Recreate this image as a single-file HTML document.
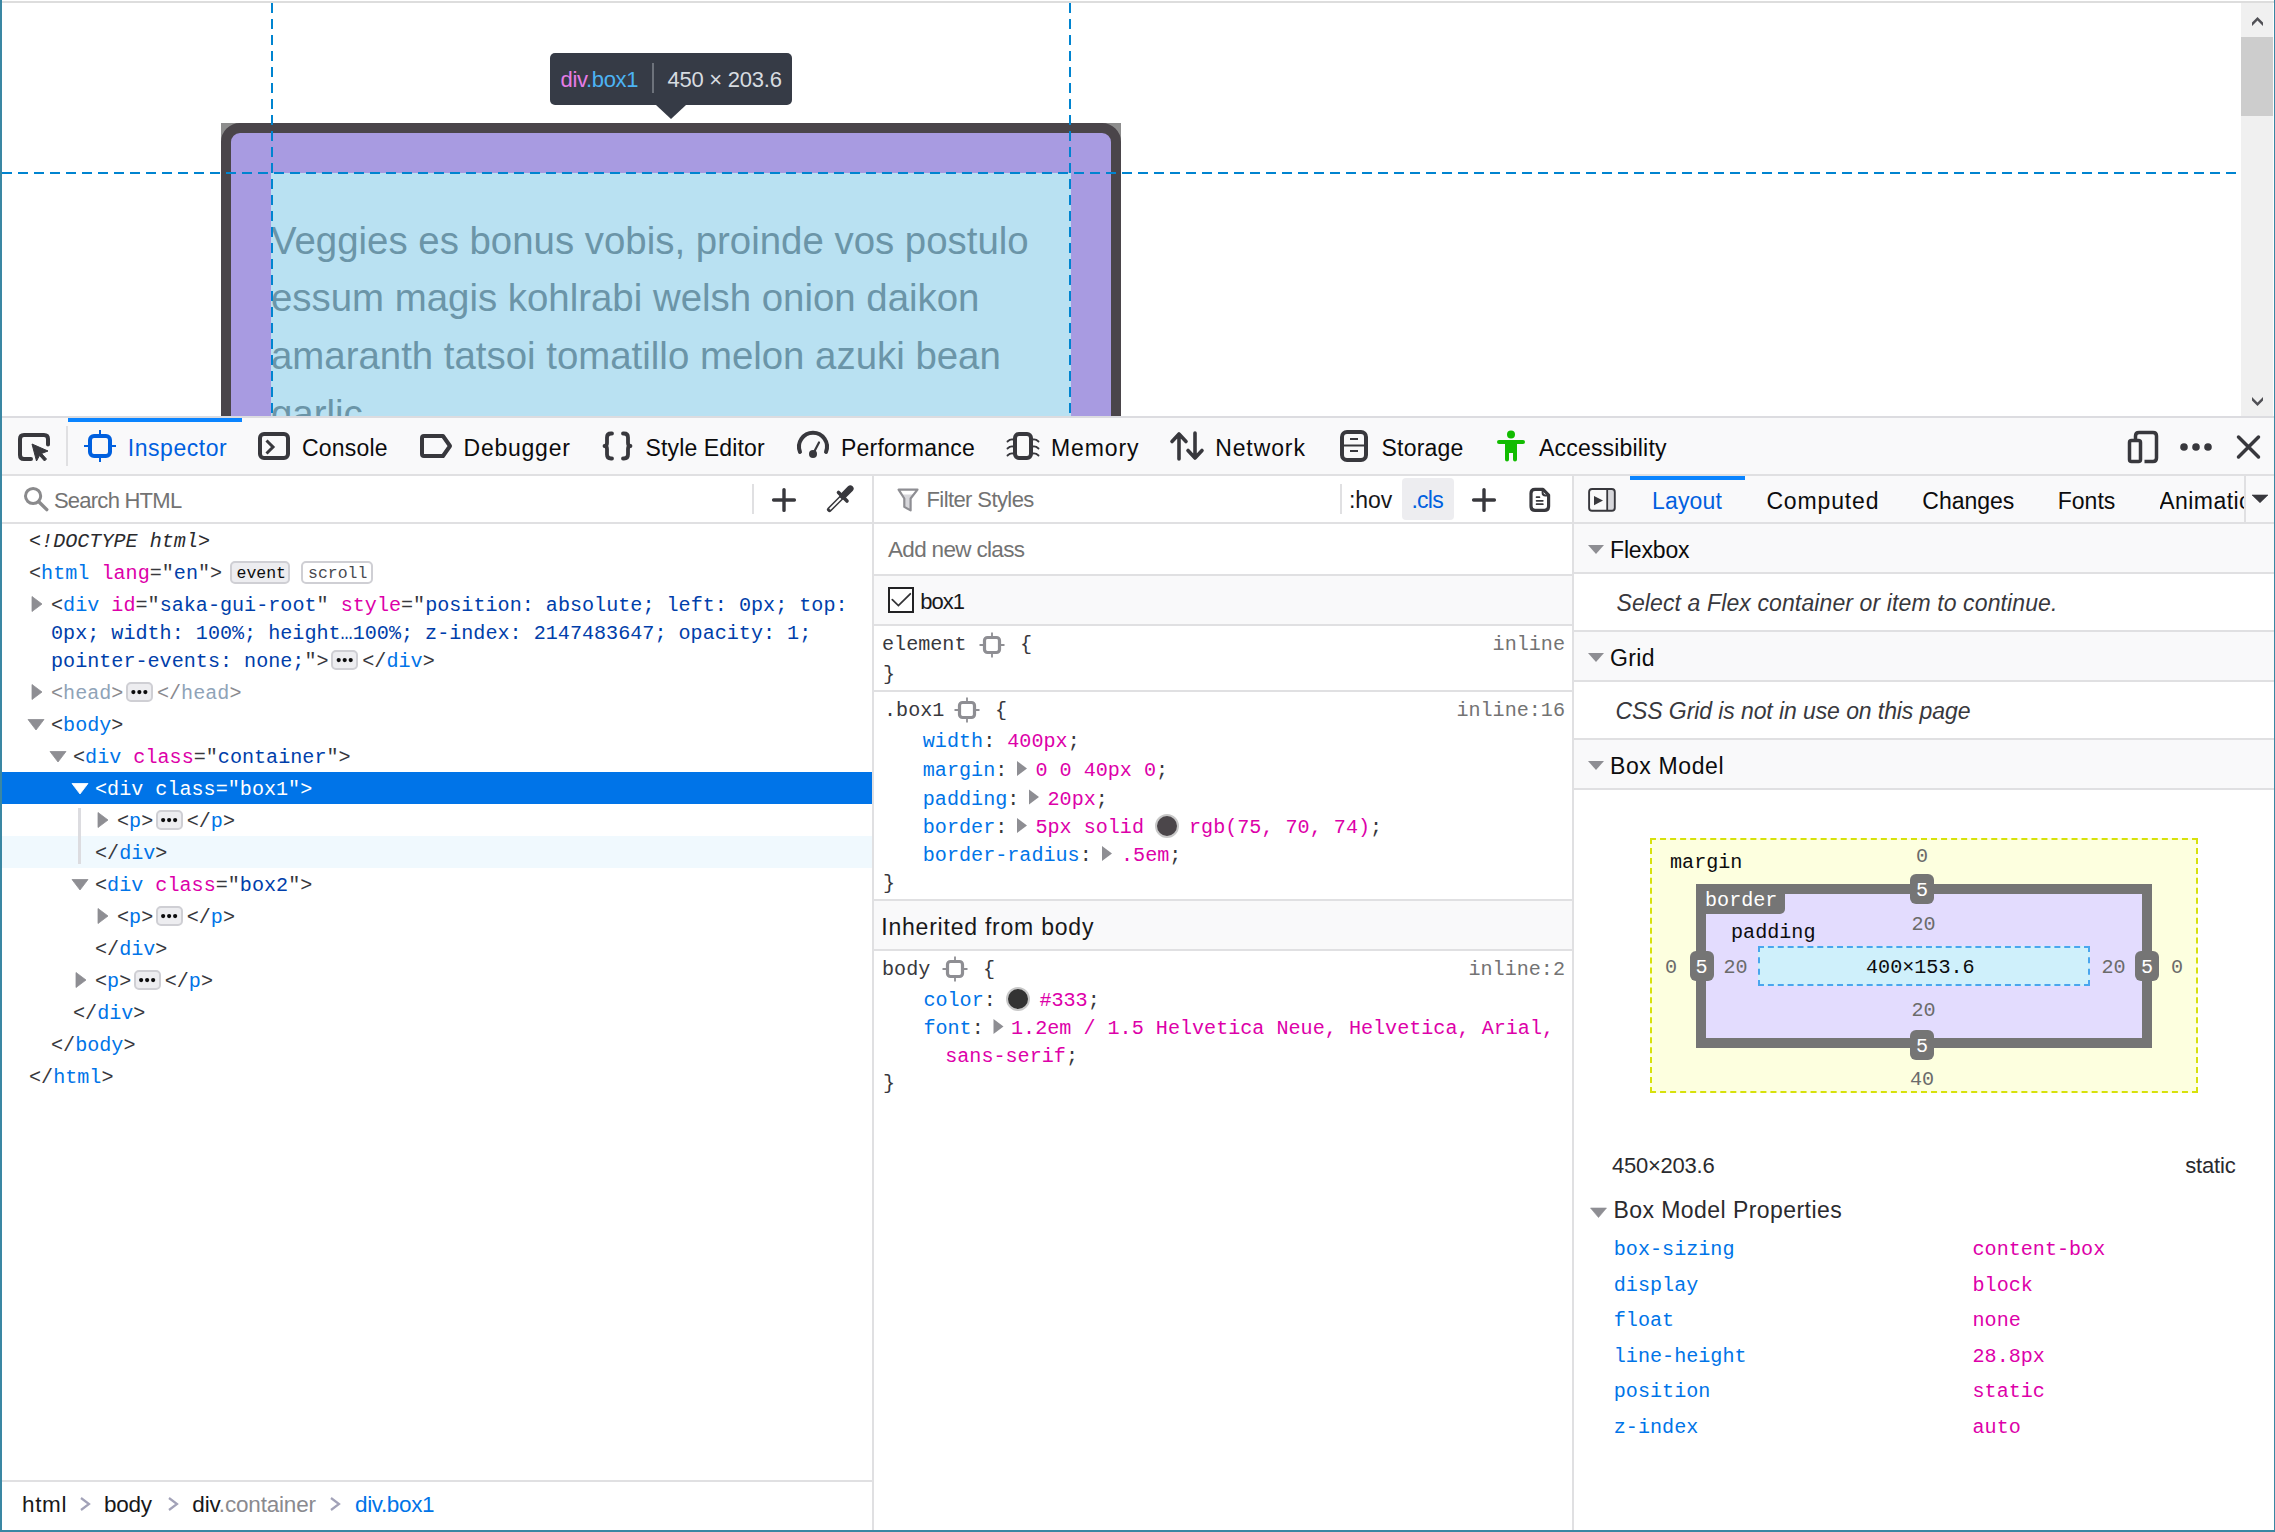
<!DOCTYPE html>
<html><head><meta charset="utf-8"><style>
html,body{margin:0;padding:0;}
body{width:2275px;height:1532px;overflow:hidden;position:relative;background:#fff;font-family:'Liberation Sans',sans-serif;}
body>div{position:absolute;}
</style></head><body>
<div style="left:0px;top:0px;width:2275px;height:416px;background:#ffffff;"></div>
<div style="left:2px;top:1px;width:2272px;height:2px;background:#dddddd;"></div>
<div style="left:221px;top:123px;width:20px;height:20px;background:#8d8d8d;"></div>
<div style="left:1101px;top:123px;width:20px;height:20px;background:#8d8d8d;"></div>
<div style="left:221px;top:123px;width:900px;height:400px;box-sizing:border-box;border:10px solid #4a454a;border-radius:19px;background:#a89be1;overflow:hidden"><div style="position:absolute;left:40px;top:40px;width:800px;height:400px;background:#b9e1f2"></div></div>
<div style="left:271px;top:221.93px;font-family:'Liberation Sans', sans-serif;font-size:38.4px;line-height:38.4px;color:#6b95a8;white-space:pre;">Veggies es bonus vobis, proinde vos postulo</div>
<div style="left:271px;top:279.13px;font-family:'Liberation Sans', sans-serif;font-size:38.4px;line-height:38.4px;color:#6b95a8;white-space:pre;">essum magis kohlrabi welsh onion daikon</div>
<div style="left:271px;top:336.93px;font-family:'Liberation Sans', sans-serif;font-size:38.4px;line-height:38.4px;color:#6b95a8;white-space:pre;">amaranth tatsoi tomatillo melon azuki bean</div>
<div style="left:271px;top:394.53px;font-family:'Liberation Sans', sans-serif;font-size:38.4px;line-height:38.4px;color:#6b95a8;white-space:pre;">garlic</div>
<div style="left:2241px;top:3px;width:32px;height:413px;background:#f0f0f0;"></div>
<div style="left:2241px;top:37px;width:32px;height:79px;background:#cdcdcd;"></div>
<div style="left:550px;top:53px;width:242px;height:52px;background:#363b46;border-radius:5px"></div>
<div style="left:560.50px;top:68.74px;font-family:'Liberation Sans', sans-serif;font-size:22px;line-height:22px;color:#18181a;white-space:pre;letter-spacing:-0.339px;"><span style="color:#e67ce6">div</span><span style="color:#4cb3f3">.box1</span></div>
<div style="left:652px;top:63px;width:1.5px;height:30px;background:#6d727b;"></div>
<div style="left:667.40px;top:68.74px;font-family:'Liberation Sans', sans-serif;font-size:22px;line-height:22px;color:#d7dbe0;white-space:pre;letter-spacing:-0.230px;">450 × 203.6</div>
<div style="left:0px;top:416px;width:2275px;height:60px;background:#f9f9fa;"></div>
<div style="left:2px;top:416px;width:2272px;height:2px;background:#dcdce0;"></div>
<div style="left:2px;top:474px;width:2272px;height:2px;background:#e0e0e2;"></div>
<div style="left:68px;top:418px;width:174px;height:4px;background:#0a84ff;"></div>
<div style="left:66px;top:426px;width:2px;height:40px;background:#e0e0e2;"></div>
<div style="left:127.80px;top:436.91px;font-family:'Liberation Sans', sans-serif;font-size:23px;line-height:23px;color:#0060df;white-space:pre;letter-spacing:0.544px;">Inspector</div>
<div style="left:302.10px;top:436.91px;font-family:'Liberation Sans', sans-serif;font-size:23px;line-height:23px;color:#0c0c0d;white-space:pre;letter-spacing:0.168px;">Console</div>
<div style="left:463.60px;top:436.91px;font-family:'Liberation Sans', sans-serif;font-size:23px;line-height:23px;color:#0c0c0d;white-space:pre;letter-spacing:0.749px;">Debugger</div>
<div style="left:645.60px;top:436.91px;font-family:'Liberation Sans', sans-serif;font-size:23px;line-height:23px;color:#0c0c0d;white-space:pre;letter-spacing:0.123px;">Style Editor</div>
<div style="left:841.00px;top:436.91px;font-family:'Liberation Sans', sans-serif;font-size:23px;line-height:23px;color:#0c0c0d;white-space:pre;letter-spacing:0.203px;">Performance</div>
<div style="left:1051.00px;top:436.91px;font-family:'Liberation Sans', sans-serif;font-size:23px;line-height:23px;color:#0c0c0d;white-space:pre;letter-spacing:0.888px;">Memory</div>
<div style="left:1215.20px;top:436.91px;font-family:'Liberation Sans', sans-serif;font-size:23px;line-height:23px;color:#0c0c0d;white-space:pre;letter-spacing:0.891px;">Network</div>
<div style="left:1381.60px;top:436.91px;font-family:'Liberation Sans', sans-serif;font-size:23px;line-height:23px;color:#0c0c0d;white-space:pre;letter-spacing:0.189px;">Storage</div>
<div style="left:1539.00px;top:436.91px;font-family:'Liberation Sans', sans-serif;font-size:23px;line-height:23px;color:#0c0c0d;white-space:pre;letter-spacing:0.187px;">Accessibility</div>
<div style="left:0px;top:476px;width:2275px;height:1056px;background:#ffffff;"></div>
<div style="left:872px;top:476px;width:2px;height:1056px;background:#e0e0e2;"></div>
<div style="left:1572px;top:476px;width:2px;height:1056px;background:#e0e0e2;"></div>
<div style="left:2px;top:522px;width:870px;height:2px;background:#e0e0e2;"></div>
<div style="left:874px;top:522px;width:698px;height:2px;background:#e0e0e2;"></div>
<div style="left:1574px;top:522px;width:700px;height:2px;background:#e0e0e2;"></div>
<div style="left:1574px;top:476px;width:700px;height:46px;background:#f9f9fa;"></div>
<div style="left:53.90px;top:489.74px;font-family:'Liberation Sans', sans-serif;font-size:22px;line-height:22px;color:#737373;white-space:pre;letter-spacing:-0.747px;">Search HTML</div>
<div style="left:752px;top:484px;width:2px;height:30px;background:#e0e0e2;"></div>
<div style="left:29px;top:531.50px;font-family:'Liberation Mono', monospace;font-size:20.13px;line-height:20.13px;color:#2a2a2e;white-space:pre;font-style:italic">&lt;!DOCTYPE html&gt;</div>
<div style="left:29px;top:563.50px;font-family:'Liberation Mono', monospace;font-size:20.13px;line-height:20.13px;color:#38383d;white-space:pre;"><span style="color:#38383d">&lt;</span><span style="color:#0074e8">html</span><span style="color:#38383d"> </span><span style="color:#dd00a9">lang</span><span style="color:#38383d">=&quot;</span><span style="color:#003eaa">en</span><span style="color:#38383d">&quot;</span><span style="color:#38383d">&gt;</span></div>
<div style="left:230.3px;top:560.5px;width:56.2px;height:19px;border:2px solid #cfcfd4;border-radius:5px;background:#ededf0"></div>
<div style="left:236.5px;top:565.71px;font-family:'Liberation Mono', monospace;font-size:16.5px;line-height:16.5px;color:#0c0c0d;white-space:pre;">event</div>
<div style="left:301.1px;top:560.5px;width:67.6px;height:19px;border:2px solid #cfcfd4;border-radius:5px;background:#ffffff"></div>
<div style="left:308px;top:565.71px;font-family:'Liberation Mono', monospace;font-size:16.5px;line-height:16.5px;color:#4a4a4f;white-space:pre;">scroll</div>
<div style="left:51px;top:595.50px;font-family:'Liberation Mono', monospace;font-size:20.13px;line-height:20.13px;color:#38383d;white-space:pre;"><span style="color:#38383d">&lt;</span><span style="color:#0074e8">div</span><span style="color:#38383d"> </span><span style="color:#dd00a9">id</span><span style="color:#38383d">=&quot;</span><span style="color:#003eaa">saka-gui-root</span><span style="color:#38383d">&quot;</span><span style="color:#38383d"> </span><span style="color:#dd00a9">style</span><span style="color:#38383d">=&quot;</span><span style="color:#003eaa">position: absolute; left: 0px; top:</span></div>
<div style="left:51px;top:623.50px;font-family:'Liberation Mono', monospace;font-size:20.13px;line-height:20.13px;color:#38383d;white-space:pre;"><span style="color:#003eaa">0px; width: 100%; height…100%; z-index: 2147483647; opacity: 1;</span></div>
<div style="left:51px;top:651.50px;font-family:'Liberation Mono', monospace;font-size:20.13px;line-height:20.13px;color:#38383d;white-space:pre;"><span style="color:#003eaa">pointer-events: none;</span><span style="color:#38383d">&quot;&gt;</span></div>
<div style="left:331.094px;top:650.3px;width:23px;height:15.4px;border:2px solid #cfcfd4;border-radius:5px;background:#ededf0"></div>
<div style="left:362.294px;top:651.50px;font-family:'Liberation Mono', monospace;font-size:20.13px;line-height:20.13px;color:#18181a;white-space:pre;"><span style="color:#38383d">&lt;/</span><span style="color:#0074e8">div</span><span style="color:#38383d">&gt;</span></div>
<div style="left:51px;top:683.50px;font-family:'Liberation Mono', monospace;font-size:20.13px;line-height:20.13px;color:#38383d;white-space:pre;"><span style="color:#8a8a8f">&lt;</span><span style="color:#8fa3b8">head</span><span style="color:#8a8a8f">&gt;</span></div>
<div style="left:125.76799999999999px;top:682.3px;width:23px;height:15.4px;border:2px solid #cfcfd4;border-radius:5px;background:#ededf0"></div>
<div style="left:156.968px;top:683.50px;font-family:'Liberation Mono', monospace;font-size:20.13px;line-height:20.13px;color:#18181a;white-space:pre;"><span style="color:#8a8a8f">&lt;/</span><span style="color:#8fa3b8">head</span><span style="color:#8a8a8f">&gt;</span></div>
<div style="left:51px;top:715.50px;font-family:'Liberation Mono', monospace;font-size:20.13px;line-height:20.13px;color:#38383d;white-space:pre;"><span style="color:#38383d">&lt;</span><span style="color:#0074e8">body</span><span style="color:#38383d">&gt;</span></div>
<div style="left:73px;top:747.50px;font-family:'Liberation Mono', monospace;font-size:20.13px;line-height:20.13px;color:#38383d;white-space:pre;"><span style="color:#38383d">&lt;</span><span style="color:#0074e8">div</span><span style="color:#38383d"> </span><span style="color:#dd00a9">class</span><span style="color:#38383d">=&quot;</span><span style="color:#003eaa">container</span><span style="color:#38383d">&quot;</span><span style="color:#38383d">&gt;</span></div>
<div style="left:2px;top:772px;width:870px;height:32px;background:#0074e8;"></div>
<div style="left:95px;top:779.50px;font-family:'Liberation Mono', monospace;font-size:20.13px;line-height:20.13px;color:#ffffff;white-space:pre;">&lt;div class=&quot;box1&quot;&gt;</div>
<div style="left:78px;top:808px;width:2.5px;height:56px;background:#dcdce0;"></div>
<div style="left:117px;top:811.50px;font-family:'Liberation Mono', monospace;font-size:20.13px;line-height:20.13px;color:#38383d;white-space:pre;"><span style="color:#38383d">&lt;</span><span style="color:#0074e8">p</span><span style="color:#38383d">&gt;</span></div>
<div style="left:155.534px;top:810.3px;width:23px;height:15.4px;border:2px solid #cfcfd4;border-radius:5px;background:#ededf0"></div>
<div style="left:186.73399999999998px;top:811.50px;font-family:'Liberation Mono', monospace;font-size:20.13px;line-height:20.13px;color:#18181a;white-space:pre;"><span style="color:#38383d">&lt;/</span><span style="color:#0074e8">p</span><span style="color:#38383d">&gt;</span></div>
<div style="left:2px;top:836px;width:870px;height:32px;background:#f0f9fe;"></div>
<div style="left:78px;top:836px;width:2.5px;height:28px;background:#dcdce0;"></div>
<div style="left:95px;top:843.50px;font-family:'Liberation Mono', monospace;font-size:20.13px;line-height:20.13px;color:#38383d;white-space:pre;"><span style="color:#38383d">&lt;/</span><span style="color:#0074e8">div</span><span style="color:#38383d">&gt;</span></div>
<div style="left:95px;top:875.50px;font-family:'Liberation Mono', monospace;font-size:20.13px;line-height:20.13px;color:#38383d;white-space:pre;"><span style="color:#38383d">&lt;</span><span style="color:#0074e8">div</span><span style="color:#38383d"> </span><span style="color:#dd00a9">class</span><span style="color:#38383d">=&quot;</span><span style="color:#003eaa">box2</span><span style="color:#38383d">&quot;</span><span style="color:#38383d">&gt;</span></div>
<div style="left:117px;top:907.50px;font-family:'Liberation Mono', monospace;font-size:20.13px;line-height:20.13px;color:#38383d;white-space:pre;"><span style="color:#38383d">&lt;</span><span style="color:#0074e8">p</span><span style="color:#38383d">&gt;</span></div>
<div style="left:155.534px;top:906.3px;width:23px;height:15.4px;border:2px solid #cfcfd4;border-radius:5px;background:#ededf0"></div>
<div style="left:186.73399999999998px;top:907.50px;font-family:'Liberation Mono', monospace;font-size:20.13px;line-height:20.13px;color:#18181a;white-space:pre;"><span style="color:#38383d">&lt;/</span><span style="color:#0074e8">p</span><span style="color:#38383d">&gt;</span></div>
<div style="left:95px;top:939.50px;font-family:'Liberation Mono', monospace;font-size:20.13px;line-height:20.13px;color:#38383d;white-space:pre;"><span style="color:#38383d">&lt;/</span><span style="color:#0074e8">div</span><span style="color:#38383d">&gt;</span></div>
<div style="left:95px;top:971.50px;font-family:'Liberation Mono', monospace;font-size:20.13px;line-height:20.13px;color:#38383d;white-space:pre;"><span style="color:#38383d">&lt;</span><span style="color:#0074e8">p</span><span style="color:#38383d">&gt;</span></div>
<div style="left:133.534px;top:970.3px;width:23px;height:15.4px;border:2px solid #cfcfd4;border-radius:5px;background:#ededf0"></div>
<div style="left:164.73399999999998px;top:971.50px;font-family:'Liberation Mono', monospace;font-size:20.13px;line-height:20.13px;color:#18181a;white-space:pre;"><span style="color:#38383d">&lt;/</span><span style="color:#0074e8">p</span><span style="color:#38383d">&gt;</span></div>
<div style="left:73px;top:1003.50px;font-family:'Liberation Mono', monospace;font-size:20.13px;line-height:20.13px;color:#38383d;white-space:pre;"><span style="color:#38383d">&lt;/</span><span style="color:#0074e8">div</span><span style="color:#38383d">&gt;</span></div>
<div style="left:51px;top:1035.50px;font-family:'Liberation Mono', monospace;font-size:20.13px;line-height:20.13px;color:#38383d;white-space:pre;"><span style="color:#38383d">&lt;/</span><span style="color:#0074e8">body</span><span style="color:#38383d">&gt;</span></div>
<div style="left:29px;top:1067.50px;font-family:'Liberation Mono', monospace;font-size:20.13px;line-height:20.13px;color:#38383d;white-space:pre;"><span style="color:#38383d">&lt;/</span><span style="color:#0074e8">html</span><span style="color:#38383d">&gt;</span></div>
<div style="left:2px;top:1480px;width:870px;height:2px;background:#e0e0e2;"></div>
<div style="left:22.00px;top:1493.62px;font-family:'Liberation Sans', sans-serif;font-size:22.5px;line-height:22.5px;color:#18181a;white-space:pre;letter-spacing:0.664px;">html</div>
<div style="left:104.00px;top:1493.62px;font-family:'Liberation Sans', sans-serif;font-size:22.5px;line-height:22.5px;color:#18181a;white-space:pre;letter-spacing:-0.280px;">body</div>
<div style="left:192.30px;top:1493.62px;font-family:'Liberation Sans', sans-serif;font-size:22.5px;line-height:22.5px;color:#18181a;white-space:pre;letter-spacing:-0.184px;"><span style="color:#18181a">div</span><span style="color:#8a8a8f">.container</span></div>
<div style="left:355.00px;top:1493.62px;font-family:'Liberation Sans', sans-serif;font-size:22.5px;line-height:22.5px;color:#0074e8;white-space:pre;letter-spacing:-0.374px;">div.box1</div>
<div style="left:926.50px;top:489.44px;font-family:'Liberation Sans', sans-serif;font-size:22px;line-height:22px;color:#737373;white-space:pre;letter-spacing:-0.592px;">Filter Styles</div>
<div style="left:1340px;top:484px;width:2px;height:30px;background:#e0e0e2;"></div>
<div style="left:1349.00px;top:488.91px;font-family:'Liberation Sans', sans-serif;font-size:23px;line-height:23px;color:#18181a;white-space:pre;letter-spacing:-0.058px;">:hov</div>
<div style="left:1402px;top:478px;width:52px;height:42px;background:#ededf0;border-radius:4px"></div>
<div style="left:1411.40px;top:488.91px;font-family:'Liberation Sans', sans-serif;font-size:23px;line-height:23px;color:#0060df;white-space:pre;letter-spacing:-0.733px;">.cls</div>
<div style="left:888.00px;top:539.12px;font-family:'Liberation Sans', sans-serif;font-size:22.5px;line-height:22.5px;color:#737373;white-space:pre;letter-spacing:-0.669px;">Add new class</div>
<div style="left:874px;top:574px;width:698px;height:2px;background:#e0e0e2;"></div>
<div style="left:874px;top:576px;width:698px;height:48px;background:#f9f9fa;"></div>
<div style="left:874px;top:624px;width:698px;height:2px;background:#e0e0e2;"></div>
<div style="left:888px;top:587px;width:22px;height:22px;border:2px solid #222224;background:#fff"></div>
<div style="left:920.30px;top:590.74px;font-family:'Liberation Sans', sans-serif;font-size:22px;line-height:22px;color:#18181a;white-space:pre;letter-spacing:-0.990px;">box1</div>
<div style="left:882px;top:635.00px;font-family:'Liberation Mono', monospace;font-size:20.13px;line-height:20.13px;color:#38383d;white-space:pre;"><span style="color:#38383d">element</span></div>
<div style="left:1020px;top:635.00px;font-family:'Liberation Mono', monospace;font-size:20.13px;line-height:20.13px;color:#38383d;white-space:pre;"><span style="color:#38383d">{</span></div>
<div style="right:710px;top:635.00px;font-family:'Liberation Mono', monospace;font-size:20.13px;line-height:20.13px;color:#737373;white-space:pre;">inline</div>
<div style="left:883px;top:665.00px;font-family:'Liberation Mono', monospace;font-size:20.13px;line-height:20.13px;color:#38383d;white-space:pre;"><span style="color:#38383d">}</span></div>
<div style="left:874px;top:690px;width:698px;height:2px;background:#e0e0e2;"></div>
<div style="left:884px;top:700.50px;font-family:'Liberation Mono', monospace;font-size:20.13px;line-height:20.13px;color:#38383d;white-space:pre;"><span style="color:#38383d">.box1</span></div>
<div style="left:995px;top:700.50px;font-family:'Liberation Mono', monospace;font-size:20.13px;line-height:20.13px;color:#38383d;white-space:pre;"><span style="color:#38383d">{</span></div>
<div style="right:710px;top:701.00px;font-family:'Liberation Mono', monospace;font-size:20.13px;line-height:20.13px;color:#737373;white-space:pre;">inline:16</div>
<div style="left:922.8px;top:732.30px;font-family:'Liberation Mono', monospace;font-size:20.13px;line-height:20.13px;color:#38383d;white-space:pre;"><span style="color:#0074e8">width</span><span style="color:#38383d">: </span><span style="color:#dd00a9">400px</span><span style="color:#38383d">;</span></div>
<div style="left:922.8px;top:761.00px;font-family:'Liberation Mono', monospace;font-size:20.13px;line-height:20.13px;color:#38383d;white-space:pre;"><span style="color:#0074e8">margin</span><span style="color:#38383d">:</span></div>
<div style="left:1035.4px;top:761.00px;font-family:'Liberation Mono', monospace;font-size:20.13px;line-height:20.13px;color:#38383d;white-space:pre;"><span style="color:#dd00a9">0 0 40px 0</span><span style="color:#38383d">;</span></div>
<div style="left:922.8px;top:789.50px;font-family:'Liberation Mono', monospace;font-size:20.13px;line-height:20.13px;color:#38383d;white-space:pre;"><span style="color:#0074e8">padding</span><span style="color:#38383d">:</span></div>
<div style="left:1047.5px;top:789.50px;font-family:'Liberation Mono', monospace;font-size:20.13px;line-height:20.13px;color:#38383d;white-space:pre;"><span style="color:#dd00a9">20px</span><span style="color:#38383d">;</span></div>
<div style="left:922.8px;top:818.00px;font-family:'Liberation Mono', monospace;font-size:20.13px;line-height:20.13px;color:#38383d;white-space:pre;"><span style="color:#0074e8">border</span><span style="color:#38383d">:</span></div>
<div style="left:1035.4px;top:818.00px;font-family:'Liberation Mono', monospace;font-size:20.13px;line-height:20.13px;color:#38383d;white-space:pre;"><span style="color:#dd00a9">5px solid</span></div>
<div style="left:1189px;top:818.00px;font-family:'Liberation Mono', monospace;font-size:20.13px;line-height:20.13px;color:#38383d;white-space:pre;"><span style="color:#dd00a9">rgb(75, 70, 74)</span><span style="color:#38383d">;</span></div>
<div style="left:922.8px;top:846.00px;font-family:'Liberation Mono', monospace;font-size:20.13px;line-height:20.13px;color:#38383d;white-space:pre;"><span style="color:#0074e8">border-radius</span><span style="color:#38383d">:</span></div>
<div style="left:1121px;top:846.00px;font-family:'Liberation Mono', monospace;font-size:20.13px;line-height:20.13px;color:#38383d;white-space:pre;"><span style="color:#dd00a9">.5em</span><span style="color:#38383d">;</span></div>
<div style="left:883px;top:874.00px;font-family:'Liberation Mono', monospace;font-size:20.13px;line-height:20.13px;color:#38383d;white-space:pre;"><span style="color:#38383d">}</span></div>
<div style="left:874px;top:899px;width:698px;height:2px;background:#e0e0e2;"></div>
<div style="left:874px;top:901px;width:698px;height:48px;background:#f9f9fa;"></div>
<div style="left:874px;top:949px;width:698px;height:2px;background:#e0e0e2;"></div>
<div style="left:881.30px;top:916.01px;font-family:'Liberation Sans', sans-serif;font-size:23px;line-height:23px;color:#18181a;white-space:pre;letter-spacing:0.774px;">Inherited from body</div>
<div style="left:882px;top:960.00px;font-family:'Liberation Mono', monospace;font-size:20.13px;line-height:20.13px;color:#38383d;white-space:pre;"><span style="color:#38383d">body</span></div>
<div style="left:983px;top:960.00px;font-family:'Liberation Mono', monospace;font-size:20.13px;line-height:20.13px;color:#38383d;white-space:pre;"><span style="color:#38383d">{</span></div>
<div style="right:710px;top:960.00px;font-family:'Liberation Mono', monospace;font-size:20.13px;line-height:20.13px;color:#737373;white-space:pre;">inline:2</div>
<div style="left:923.4px;top:991.00px;font-family:'Liberation Mono', monospace;font-size:20.13px;line-height:20.13px;color:#38383d;white-space:pre;"><span style="color:#0074e8">color</span><span style="color:#38383d">:</span></div>
<div style="left:1039.4px;top:991.00px;font-family:'Liberation Mono', monospace;font-size:20.13px;line-height:20.13px;color:#38383d;white-space:pre;"><span style="color:#dd00a9">#333</span><span style="color:#38383d">;</span></div>
<div style="left:923.4px;top:1019.00px;font-family:'Liberation Mono', monospace;font-size:20.13px;line-height:20.13px;color:#38383d;white-space:pre;"><span style="color:#0074e8">font</span><span style="color:#38383d">:</span></div>
<div style="left:1011px;top:1019.00px;font-family:'Liberation Mono', monospace;font-size:20.13px;line-height:20.13px;color:#38383d;white-space:pre;"><span style="color:#dd00a9">1.2em / 1.5 Helvetica Neue, Helvetica, Arial,</span></div>
<div style="left:945.2px;top:1047.00px;font-family:'Liberation Mono', monospace;font-size:20.13px;line-height:20.13px;color:#38383d;white-space:pre;"><span style="color:#dd00a9">sans-serif</span><span style="color:#38383d">;</span></div>
<div style="left:883px;top:1074.00px;font-family:'Liberation Mono', monospace;font-size:20.13px;line-height:20.13px;color:#38383d;white-space:pre;"><span style="color:#38383d">}</span></div>
<div style="left:1630px;top:476px;width:115px;height:4px;background:#0a84ff;"></div>
<div style="left:1652.00px;top:489.61px;font-family:'Liberation Sans', sans-serif;font-size:23px;line-height:23px;color:#0060df;white-space:pre;letter-spacing:0.167px;">Layout</div>
<div style="left:1766.40px;top:489.61px;font-family:'Liberation Sans', sans-serif;font-size:23px;line-height:23px;color:#0c0c0d;white-space:pre;letter-spacing:0.854px;">Computed</div>
<div style="left:1922.30px;top:489.61px;font-family:'Liberation Sans', sans-serif;font-size:23px;line-height:23px;color:#0c0c0d;white-space:pre;letter-spacing:-0.011px;">Changes</div>
<div style="left:2057.70px;top:489.61px;font-family:'Liberation Sans', sans-serif;font-size:23px;line-height:23px;color:#0c0c0d;white-space:pre;letter-spacing:0.019px;">Fonts</div>
<div style="left:2159.7px;top:480px;width:84.3px;height:40px;overflow:hidden"><div style="position:absolute;left:-0.5px;top:9.61px;font-size:23px;line-height:23px;letter-spacing:0.45px;color:#0c0c0d;white-space:pre">Animations</div></div>
<div style="left:2244px;top:476px;width:2px;height:46px;background:#e0e0e2;"></div>
<div style="left:1574px;top:524px;width:700px;height:48px;background:#f9f9fa;"></div>
<div style="left:1574px;top:572px;width:700px;height:2px;background:#e0e0e2;"></div>
<div style="left:1610.00px;top:538.71px;font-family:'Liberation Sans', sans-serif;font-size:23px;line-height:23px;color:#0c0c0d;white-space:pre;letter-spacing:-0.172px;">Flexbox</div>
<div style="left:1616.50px;top:591.91px;font-family:'Liberation Sans', sans-serif;font-size:23px;line-height:23px;color:#38383d;white-space:pre;letter-spacing:0.115px;font-style:italic">Select a Flex container or item to continue.</div>
<div style="left:1574px;top:630px;width:700px;height:2px;background:#e0e0e2;"></div>
<div style="left:1574px;top:632px;width:700px;height:48px;background:#f9f9fa;"></div>
<div style="left:1574px;top:680px;width:700px;height:2px;background:#e0e0e2;"></div>
<div style="left:1610.00px;top:646.71px;font-family:'Liberation Sans', sans-serif;font-size:23px;line-height:23px;color:#0c0c0d;white-space:pre;letter-spacing:0.347px;">Grid</div>
<div style="left:1615.50px;top:699.91px;font-family:'Liberation Sans', sans-serif;font-size:23px;line-height:23px;color:#38383d;white-space:pre;letter-spacing:-0.088px;font-style:italic">CSS Grid is not in use on this page</div>
<div style="left:1574px;top:738px;width:700px;height:2px;background:#e0e0e2;"></div>
<div style="left:1574px;top:740px;width:700px;height:48px;background:#f9f9fa;"></div>
<div style="left:1574px;top:788px;width:700px;height:2px;background:#e0e0e2;"></div>
<div style="left:1610.00px;top:754.71px;font-family:'Liberation Sans', sans-serif;font-size:23px;line-height:23px;color:#0c0c0d;white-space:pre;letter-spacing:0.618px;">Box Model</div>
<div style="left:1650px;top:838px;width:548px;height:255px;box-sizing:border-box;border:2px dashed #d7e10b;background:#fdffdf"></div>
<div style="left:1696px;top:884px;width:456px;height:164px;box-sizing:border-box;border:10px solid #757575;background:#e3dcfe"></div>
<div style="left:1758px;top:946px;width:332px;height:40px;box-sizing:border-box;border:2px dashed #49a6ee;background:#cff0fb"></div>
<div style="left:1696px;top:884px;width:89px;height:30px;background:#757575;border-bottom-right-radius:5px"></div>
<div style="left:1705px;top:890.50px;font-family:'Liberation Mono', monospace;font-size:20.13px;line-height:20.13px;color:#ffffff;white-space:pre;">border</div>
<div style="left:1670px;top:853.00px;font-family:'Liberation Mono', monospace;font-size:20.13px;line-height:20.13px;color:#0c0c0d;white-space:pre;">margin</div>
<div style="left:1731px;top:923.00px;font-family:'Liberation Mono', monospace;font-size:20.13px;line-height:20.13px;color:#0c0c0d;white-space:pre;">padding</div>
<div style="left:1866px;top:957.50px;font-family:'Liberation Mono', monospace;font-size:20.13px;line-height:20.13px;color:#0c0c0d;white-space:pre;">400×153.6</div>
<div style="left:1916px;top:847.00px;font-family:'Liberation Mono', monospace;font-size:20.13px;line-height:20.13px;color:#6b6b6b;white-space:pre;">0</div>
<div style="left:1911.5px;top:915.00px;font-family:'Liberation Mono', monospace;font-size:20.13px;line-height:20.13px;color:#6b6b6b;white-space:pre;">20</div>
<div style="left:1911.5px;top:1001.00px;font-family:'Liberation Mono', monospace;font-size:20.13px;line-height:20.13px;color:#6b6b6b;white-space:pre;">20</div>
<div style="left:1910px;top:1069.50px;font-family:'Liberation Mono', monospace;font-size:20.13px;line-height:20.13px;color:#6b6b6b;white-space:pre;">40</div>
<div style="left:1665px;top:957.50px;font-family:'Liberation Mono', monospace;font-size:20.13px;line-height:20.13px;color:#6b6b6b;white-space:pre;">0</div>
<div style="left:1723.5px;top:957.50px;font-family:'Liberation Mono', monospace;font-size:20.13px;line-height:20.13px;color:#6b6b6b;white-space:pre;">20</div>
<div style="left:2101.5px;top:957.50px;font-family:'Liberation Mono', monospace;font-size:20.13px;line-height:20.13px;color:#6b6b6b;white-space:pre;">20</div>
<div style="left:2171px;top:957.50px;font-family:'Liberation Mono', monospace;font-size:20.13px;line-height:20.13px;color:#6b6b6b;white-space:pre;">0</div>
<div style="left:1910px;top:874px;width:24px;height:30px;background:#757575;border-radius:6px"></div>
<div style="left:1916px;top:881.00px;font-family:'Liberation Mono', monospace;font-size:20.13px;line-height:20.13px;color:#ffffff;white-space:pre;">5</div>
<div style="left:1910px;top:1030px;width:24px;height:30px;background:#757575;border-radius:6px"></div>
<div style="left:1916px;top:1037.00px;font-family:'Liberation Mono', monospace;font-size:20.13px;line-height:20.13px;color:#ffffff;white-space:pre;">5</div>
<div style="left:1689.5px;top:951px;width:24px;height:30px;background:#757575;border-radius:6px"></div>
<div style="left:1695.5px;top:958.00px;font-family:'Liberation Mono', monospace;font-size:20.13px;line-height:20.13px;color:#ffffff;white-space:pre;">5</div>
<div style="left:2135px;top:951px;width:24px;height:30px;background:#757575;border-radius:6px"></div>
<div style="left:2141px;top:958.00px;font-family:'Liberation Mono', monospace;font-size:20.13px;line-height:20.13px;color:#ffffff;white-space:pre;">5</div>
<div style="left:1612.00px;top:1155.24px;font-family:'Liberation Sans', sans-serif;font-size:22px;line-height:22px;color:#2a2a2e;white-space:pre;letter-spacing:-0.247px;">450×203.6</div>
<div style="right:39.5px;top:1155.24px;font-family:'Liberation Sans', sans-serif;font-size:22px;line-height:22px;color:#2a2a2e;white-space:pre;letter-spacing:-0.170px;">static</div>
<div style="left:1613.50px;top:1199.11px;font-family:'Liberation Sans', sans-serif;font-size:23px;line-height:23px;color:#2a2a2e;white-space:pre;letter-spacing:0.438px;">Box Model Properties</div>
<div style="left:1613.8px;top:1240.00px;font-family:'Liberation Mono', monospace;font-size:20.13px;line-height:20.13px;color:#0074e8;white-space:pre;">box-sizing</div>
<div style="left:1972.5px;top:1240.00px;font-family:'Liberation Mono', monospace;font-size:20.13px;line-height:20.13px;color:#dd00a9;white-space:pre;">content-box</div>
<div style="left:1613.8px;top:1275.60px;font-family:'Liberation Mono', monospace;font-size:20.13px;line-height:20.13px;color:#0074e8;white-space:pre;">display</div>
<div style="left:1972.5px;top:1275.60px;font-family:'Liberation Mono', monospace;font-size:20.13px;line-height:20.13px;color:#dd00a9;white-space:pre;">block</div>
<div style="left:1613.8px;top:1311.20px;font-family:'Liberation Mono', monospace;font-size:20.13px;line-height:20.13px;color:#0074e8;white-space:pre;">float</div>
<div style="left:1972.5px;top:1311.20px;font-family:'Liberation Mono', monospace;font-size:20.13px;line-height:20.13px;color:#dd00a9;white-space:pre;">none</div>
<div style="left:1613.8px;top:1346.80px;font-family:'Liberation Mono', monospace;font-size:20.13px;line-height:20.13px;color:#0074e8;white-space:pre;">line-height</div>
<div style="left:1972.5px;top:1346.80px;font-family:'Liberation Mono', monospace;font-size:20.13px;line-height:20.13px;color:#dd00a9;white-space:pre;">28.8px</div>
<div style="left:1613.8px;top:1382.40px;font-family:'Liberation Mono', monospace;font-size:20.13px;line-height:20.13px;color:#0074e8;white-space:pre;">position</div>
<div style="left:1972.5px;top:1382.40px;font-family:'Liberation Mono', monospace;font-size:20.13px;line-height:20.13px;color:#dd00a9;white-space:pre;">static</div>
<div style="left:1613.8px;top:1418.00px;font-family:'Liberation Mono', monospace;font-size:20.13px;line-height:20.13px;color:#0074e8;white-space:pre;">z-index</div>
<div style="left:1972.5px;top:1418.00px;font-family:'Liberation Mono', monospace;font-size:20.13px;line-height:20.13px;color:#dd00a9;white-space:pre;">auto</div>
<div style="left:0px;top:0px;width:2px;height:1532px;background:#3a87a3;"></div>
<div style="left:2274px;top:0px;width:1px;height:1532px;background:#3a87a3;"></div>
<div style="left:0px;top:1530px;width:2275px;height:2px;background:#3a87a3;"></div>
<svg style="position:absolute;left:0;top:0" width="2275" height="1532" viewBox="0 0 2275 1532">
<path d="M2252 26 L2257.5 20.5 L2263 26 L2263 22.5 L2257.5 17 L2252 22.5 Z" fill="#505055"/>
<path d="M2252 397 L2257.5 402.5 L2263 397 L2263 400.5 L2257.5 406 L2252 400.5 Z" fill="#505055"/>
<line x1="2" y1="173" x2="2240" y2="173" stroke="#0084d0" stroke-width="2" stroke-dasharray="10 6"/>
<line x1="272" y1="3" x2="272" y2="416" stroke="#0084d0" stroke-width="2" stroke-dasharray="10 6"/>
<line x1="1070" y1="3" x2="1070" y2="416" stroke="#0084d0" stroke-width="2" stroke-dasharray="10 6"/>
<path d="M656 105 L671 119 L686 105 Z" fill="#363b46"/>
<circle cx="33.1" cy="496" r="7.6" fill="none" stroke="#8a8a8c" stroke-width="3"/><line x1="38.8" y1="501.8" x2="46.8" y2="509.6" stroke="#8a8a8c" stroke-width="3.4" stroke-linecap="round"/>
<path d="M773.6 500 H794.4 M784 489.6 V510.4" stroke="#38383d" stroke-width="3.4" stroke-linecap="round"/>
<path d="M32 596.5 L42 604 L32 611.5 Z" fill="#8e8e93" stroke="#8e8e93" stroke-width="0.8" stroke-linejoin="round"/>
<circle cx="338.694" cy="660.1" r="2.1" fill="#0c0c0d"/>
<circle cx="344.694" cy="660.1" r="2.1" fill="#0c0c0d"/>
<circle cx="350.694" cy="660.1" r="2.1" fill="#0c0c0d"/>
<path d="M32 684.5 L42 692 L32 699.5 Z" fill="#8e8e93" stroke="#8e8e93" stroke-width="0.8" stroke-linejoin="round"/>
<circle cx="133.368" cy="692.1" r="2.1" fill="#0c0c0d"/>
<circle cx="139.368" cy="692.1" r="2.1" fill="#0c0c0d"/>
<circle cx="145.368" cy="692.1" r="2.1" fill="#0c0c0d"/>
<path d="M28 719.5 L44 719.5 L36 730 Z" fill="#8e8e93" stroke="#8e8e93" stroke-width="0.8" stroke-linejoin="round"/>
<path d="M50 751.5 L66 751.5 L58 762 Z" fill="#8e8e93" stroke="#8e8e93" stroke-width="0.8" stroke-linejoin="round"/>
<path d="M72 783.5 L88 783.5 L80 794 Z" fill="#ffffff" stroke="#ffffff" stroke-width="0.8" stroke-linejoin="round"/>
<path d="M98 812.5 L108 820 L98 827.5 Z" fill="#8e8e93" stroke="#8e8e93" stroke-width="0.8" stroke-linejoin="round"/>
<circle cx="163.134" cy="820.1" r="2.1" fill="#0c0c0d"/>
<circle cx="169.134" cy="820.1" r="2.1" fill="#0c0c0d"/>
<circle cx="175.134" cy="820.1" r="2.1" fill="#0c0c0d"/>
<path d="M72 879.5 L88 879.5 L80 890 Z" fill="#8e8e93" stroke="#8e8e93" stroke-width="0.8" stroke-linejoin="round"/>
<path d="M98 908.5 L108 916 L98 923.5 Z" fill="#8e8e93" stroke="#8e8e93" stroke-width="0.8" stroke-linejoin="round"/>
<circle cx="163.134" cy="916.1" r="2.1" fill="#0c0c0d"/>
<circle cx="169.134" cy="916.1" r="2.1" fill="#0c0c0d"/>
<circle cx="175.134" cy="916.1" r="2.1" fill="#0c0c0d"/>
<path d="M76 972.5 L86 980 L76 987.5 Z" fill="#8e8e93" stroke="#8e8e93" stroke-width="0.8" stroke-linejoin="round"/>
<circle cx="141.134" cy="980.1" r="2.1" fill="#0c0c0d"/>
<circle cx="147.134" cy="980.1" r="2.1" fill="#0c0c0d"/>
<circle cx="153.134" cy="980.1" r="2.1" fill="#0c0c0d"/>
<path d="M81 1498 L89 1504 L81 1510" fill="none" stroke="#a2a2b8" stroke-width="2.2"/>
<path d="M169 1498 L177 1504 L169 1510" fill="none" stroke="#a2a2b8" stroke-width="2.2"/>
<path d="M331 1498 L339 1504 L331 1510" fill="none" stroke="#a2a2b8" stroke-width="2.2"/>
<path d="M902.4 494.6 H913.8 L910.6 498.5 V510 L904.3 506.8 V498.5 Z" fill="#d7d7db"/><path d="M898.6 489.6 H917.5 L910.6 498.5 V510.4 L904.3 506.9 V498.5 Z" fill="none" stroke="#8e8e93" stroke-width="2.2" stroke-linejoin="round"/>
<path d="M1473.6 500 H1494.4 M1484 489.6 V510.4" stroke="#38383d" stroke-width="3.4" stroke-linecap="round"/>
<path d="M1535 489.3 H1543 L1548.6 495 V506.3 Q1548.6 510.3 1544.6 510.3 H1535 Q1531 510.3 1531 506.3 V493.3 Q1531 489.3 1535 489.3 Z" fill="none" stroke="#38383d" stroke-width="3.2" stroke-linejoin="round"/>
<path d="M1542.6 490 V492.8 Q1542.6 495.6 1545.4 495.6 H1548" fill="none" stroke="#38383d" stroke-width="2"/><path d="M1536.6 497.2 H1539.4 M1536.6 500.8 H1542.8 M1536.6 504.2 H1542.8" stroke="#38383d" stroke-width="1.8" stroke-linecap="round"/>
<path d="M829.5 509.5 L843 496" stroke="#38383d" stroke-width="5" stroke-linecap="round"/><path d="M830.4 508.6 L842 497" stroke="#ffffff" stroke-width="2" stroke-linecap="round"/>
<path d="M838.5 492.5 L847 501" stroke="#38383d" stroke-width="3.6" stroke-linecap="round"/><path d="M843 496 L850.3 488.7" stroke="#38383d" stroke-width="6.6" stroke-linecap="round"/>
<path d="M892.3 599.7 L898.4 605.6 L910.3 593.8" fill="none" stroke="#333336" stroke-width="1.8" stroke-linecap="round"/>
<rect x="984.5" y="637.5" width="15" height="15" rx="3" fill="none" stroke="#8e8e93" stroke-width="3.2"/><path d="M992.0 632.5 V636 M992.0 654 V657.5 M979.5 645 H983.0 M1001.0 645 H1004.5" stroke="#8e8e93" stroke-width="1.8"/>
<rect x="959.5" y="702.5" width="15" height="15" rx="3" fill="none" stroke="#8e8e93" stroke-width="3.2"/><path d="M967.0 697.5 V701 M967.0 719 V722.5 M954.5 710 H958.0 M976.0 710 H979.5" stroke="#8e8e93" stroke-width="1.8"/>
<path d="M1017 761 L1027 768.5 L1017 776 Z" fill="#8e8e93"/>
<path d="M1029 789.5 L1039 797.0 L1029 804.5 Z" fill="#8e8e93"/>
<path d="M1017 818 L1027 825.5 L1017 833 Z" fill="#8e8e93"/>
<circle cx="1167" cy="826" r="11" fill="#4b464a" stroke="#c8c8c8" stroke-width="2"/>
<path d="M1102 846 L1112 853.5 L1102 861 Z" fill="#8e8e93"/>
<rect x="947.5" y="961.5" width="15" height="15" rx="3" fill="none" stroke="#8e8e93" stroke-width="3.2"/><path d="M955.0 956.5 V960 M955.0 978 V981.5 M942.5 969 H946.0 M964.0 969 H967.5" stroke="#8e8e93" stroke-width="1.8"/>
<circle cx="1018" cy="999" r="11" fill="#333333" stroke="#c8c8c8" stroke-width="2"/>
<path d="M993.5 1019 L1003.5 1026.5 L993.5 1034 Z" fill="#8e8e93"/>
<rect x="1608" y="490" width="6.8" height="20.5" fill="#d7d7db"/><rect x="1589.1" y="489" width="25.7" height="21.8" rx="3" fill="none" stroke="#38383d" stroke-width="1.9"/><path d="M1607.2 489.5 V510.5" stroke="#38383d" stroke-width="1.8"/><path d="M1594 496 L1603 500.5 L1594 505.2 Z" fill="#38383d"/>
<path d="M2252 495 L2268 495 L2260 502.7 Z" fill="#38383d" stroke="#38383d" stroke-width="0.6" stroke-linejoin="round"/>
<path d="M1588 545 L1604 545 L1596 554 Z" fill="#8e8e93"/>
<path d="M1588 653 L1604 653 L1596 662 Z" fill="#8e8e93"/>
<path d="M1588 761 L1604 761 L1596 770 Z" fill="#8e8e93"/>
<path d="M1590.5 1208 L1606.5 1208 L1598.5 1217.5 Z" fill="#8e8e93" stroke="#8e8e93" stroke-width="0.6" stroke-linejoin="round"/>
<path d="M31 459 H24 Q20 459 20 455 V439 Q20 435 24 435 H44 Q48 435 48 439 V444.5" fill="none" stroke="#38383d" stroke-width="4" stroke-linecap="round" stroke-linejoin="round"/>
<path d="M32 444 L48 451 L41.5 453.5 L46.5 459 L44.5 461 L39.5 455.5 L36.5 461 Z" fill="#38383d" stroke="#38383d" stroke-width="1" stroke-linejoin="round"/>
<rect x="90" y="436" width="20" height="20" rx="4" fill="none" stroke="#0060df" stroke-width="4"/><path d="M100 430 V436 M100 456 V462 M84 446 H90 M110 446 H116" stroke="#0060df" stroke-width="2"/>
<rect x="260" y="434" width="28" height="24" rx="4" fill="none" stroke="#38383d" stroke-width="4"/><path d="M266.5 440.5 L273 447 L266.5 453.5" fill="none" stroke="#38383d" stroke-width="3"/>
<path d="M424 436 H443 L450 446 L443 456 H424 Q422 456 422 454 V438 Q422 436 424 436 Z" fill="none" stroke="#38383d" stroke-width="4" stroke-linejoin="round"/>
<path d="M612 433.5 H611 Q607 433.5 607 437.5 V443 Q607 446 604.5 446 Q607 446 607 449 V454.5 Q607 458.5 611 458.5 H612" fill="none" stroke="#38383d" stroke-width="3.8" stroke-linecap="round" stroke-linejoin="round"/>
<path d="M623 433.5 H624 Q628 433.5 628 437.5 V443 Q628 446 630.5 446 Q628 446 628 449 V454.5 Q628 458.5 624 458.5 H623" fill="none" stroke="#38383d" stroke-width="3.8" stroke-linecap="round" stroke-linejoin="round"/>
<path d="M800 452 A14 14 0 1 1 826 452" fill="none" stroke="#38383d" stroke-width="4" stroke-linecap="round"/><circle cx="813" cy="454" r="4" fill="#38383d"/><path d="M813 454 L819 442.5" stroke="#38383d" stroke-width="2.2" stroke-linecap="round"/>
<rect x="1015" y="434" width="16" height="24" rx="4" fill="none" stroke="#38383d" stroke-width="4"/><path d="M1007.5 441.5 Q1010 439 1013 439.5 M1007.5 448.5 Q1010 446 1013 446.5 M1007.5 455.5 Q1010 453 1013 453.5 M1038.5 441.5 Q1036 439 1033 439.5 M1038.5 448.5 Q1036 446 1033 446.5 M1038.5 455.5 Q1036 453 1033 453.5" fill="none" stroke="#38383d" stroke-width="1.8" stroke-linecap="round"/>
<path d="M1179 459 V434 M1172 441.5 L1179 434 L1186 441.5 M1195 433 V458 M1188 450.5 L1195 458 L1202 450.5" fill="none" stroke="#38383d" stroke-width="3.6" stroke-linecap="round" stroke-linejoin="round"/>
<rect x="1342" y="432" width="24" height="28" rx="5" fill="none" stroke="#38383d" stroke-width="4"/><path d="M1343 445.5 H1365" stroke="#38383d" stroke-width="2"/><path d="M1350 439 H1358 M1350 451 H1358" stroke="#38383d" stroke-width="2"/>
<circle cx="1511" cy="434.5" r="4" fill="#12bc00"/><path d="M1499 442 H1523" stroke="#12bc00" stroke-width="4" stroke-linecap="round"/><rect x="1505" y="441" width="12" height="12" fill="#12bc00"/><path d="M1507 452 V459.5 M1515 452 V459.5" stroke="#12bc00" stroke-width="4" stroke-linecap="round"/>
<path d="M2135.5 439 V436 Q2135.5 432.5 2139 432.5 H2153 Q2156.5 432.5 2156.5 436 V458 Q2156.5 461.5 2153 461.5 H2144.5" fill="none" stroke="#38383d" stroke-width="3.5" stroke-linejoin="round"/><rect x="2129.5" y="440.5" width="11" height="21" rx="2" fill="none" stroke="#38383d" stroke-width="3.5"/>
<circle cx="2184" cy="447" r="3.8" fill="#38383d"/><circle cx="2196" cy="447" r="3.8" fill="#38383d"/><circle cx="2208" cy="447" r="3.8" fill="#38383d"/>
<path d="M2238.5 437 L2258.5 457 M2258.5 437 L2238.5 457" stroke="#38383d" stroke-width="3.5" stroke-linecap="round"/>
</svg>
</body></html>
